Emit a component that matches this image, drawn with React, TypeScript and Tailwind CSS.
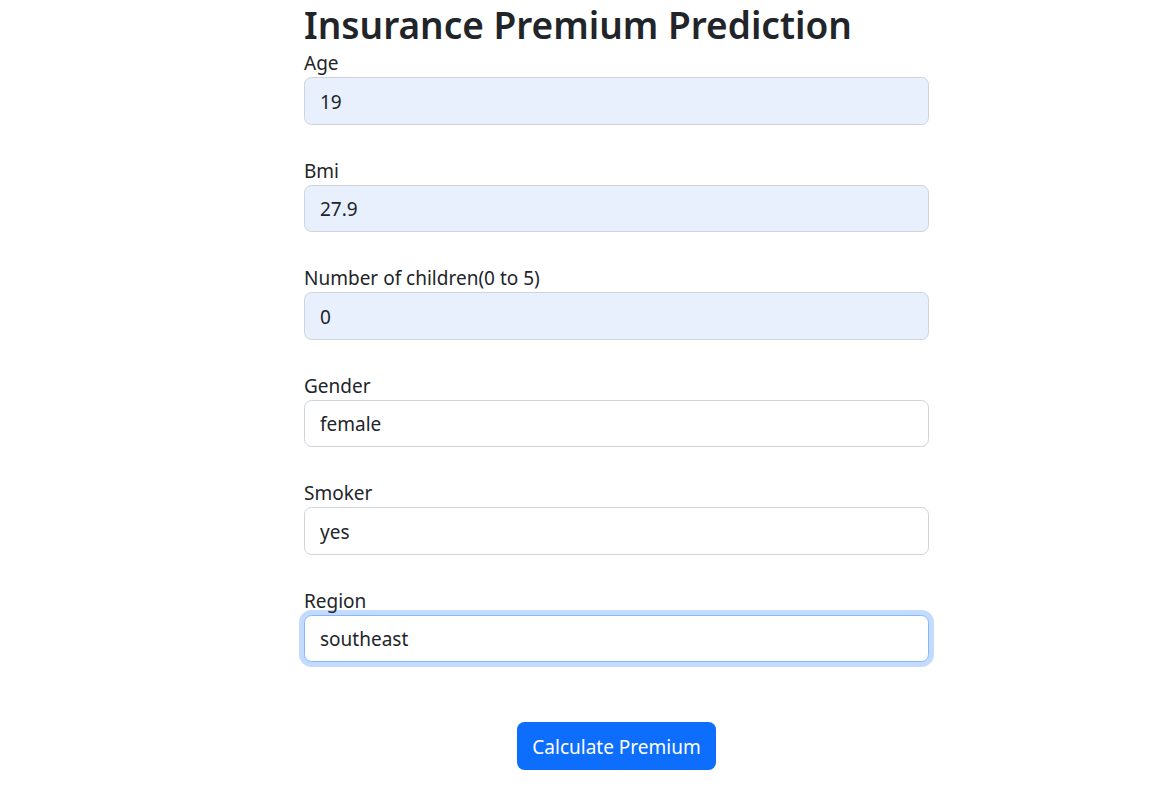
import { useState } from "react";

const fields = [
  { label: "Age", value: "19", autofill: true },
  { label: "Bmi", value: "27.9", autofill: true },
  { label: "Number of children(0 to 5)", value: "0", autofill: true },
  { label: "Gender", value: "female", autofill: false },
  { label: "Smoker", value: "yes", autofill: false },
  { label: "Region", value: "southeast", autofill: false, focused: true },
];

export default function App() {
  const [values, setValues] = useState(fields.map((f) => f.value));

  return (
    <div className="min-h-[798px] bg-white text-[#212529] font-['Noto_Sans',sans-serif]">
      <div className="ml-[304px] w-[625px]">
        <h1 className="h-[47px] pt-[1px] text-[37px] font-semibold leading-[47px] whitespace-nowrap">
          Insurance Premium Prediction
        </h1>

        <form onSubmit={(e) => e.preventDefault()}>
          {fields.map((f, i) => (
            <div key={f.label} className="mb-[30px]">
              <label className="block h-[30px] pt-[1px] text-[19px] leading-[30px]">{f.label}</label>
              <input
                type="text"
                value={values[i]}
                onChange={(e) => setValues((prev) => prev.map((v, j) => (j === i ? e.target.value : v)))}
                className={`block w-full h-[47.5px] px-[15px] pt-[2px] text-[19px] text-[#212529] rounded-[7.5px] border outline-none ${
                  f.autofill ? "bg-[#e8f0fe]" : "bg-white"
                } ${
                  f.focused
                    ? "border-[#86b7fe] shadow-[0_0_0_5px_rgba(13,110,253,0.25)]"
                    : "border-[#ced4da]"
                }`}
              />
            </div>
          ))}

          {/* Submit */}
          <div className="flex justify-center pt-[30px]">
            <button
              type="submit"
              className="h-[47.5px] px-[15px] pt-[2px] text-[19px] text-white bg-[#0d6efd] rounded-[7.5px] hover:bg-[#0b5ed7]"
            >
              Calculate Premium
            </button>
          </div>
        </form>
      </div>
    </div>
  );
}
